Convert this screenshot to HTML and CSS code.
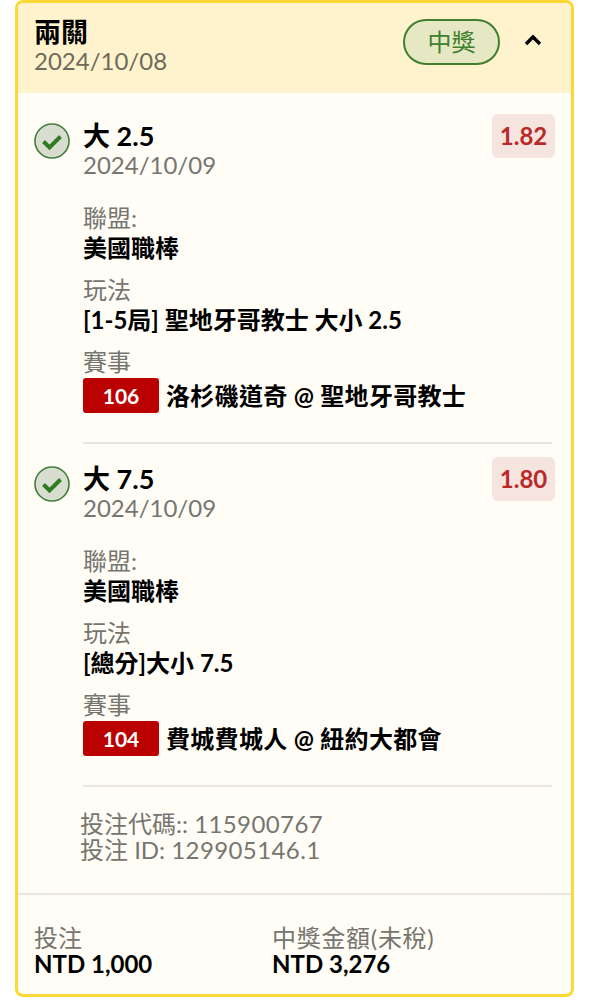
FILE: index.html
```html
<!DOCTYPE html>
<html lang="zh-Hant">
<head>
    <meta charset="UTF-8">
    <title>兩關</title>
    <link rel="stylesheet" href="styles.css">
</head>
<body>
    <div class="card">
        <header class="card-head">
            <div>
                <div class="card-title">兩關</div>
                <div class="card-date">2024/10/08</div>
            </div>
            <div class="head-right">
                <span class="status">中獎</span>
                <svg class="chevron" width="18" height="12" viewBox="0 0 18 12"><path d="M2 10l7-7 7 7" fill="none" stroke="#000" stroke-width="3.4"/></svg>
            </div>
        </header>

        <section class="leg">
            <svg class="check" width="36" height="36" viewBox="0 0 36 36"><circle cx="18" cy="18" r="17" fill="#d9ddcf" stroke="#3f7f3a" stroke-width="1.6"/><path d="M9.5 18.5l6 6 11-11" fill="none" stroke="#2e7d24" stroke-width="4"/></svg>
            <div class="leg-body">
                <div class="leg-top">
                    <div>
                        <div class="pick">大 2.5</div>
                        <div class="muted">2024/10/09</div>
                    </div>
                    <span class="odds">1.82</span>
                </div>
                <div class="info">
                    <div class="muted">聯盟:</div>
                    <div class="strong">美國職棒</div>
                </div>
                <div class="info">
                    <div class="muted">玩法</div>
                    <div class="strong">[1-5局] 聖地牙哥教士 大小 2.5</div>
                </div>
                <div class="info">
                    <div class="muted">賽事</div>
                    <div class="match"><span class="game-no">106</span><span class="strong">洛杉磯道奇 @ 聖地牙哥教士</span></div>
                </div>
            </div>
        </section>

        <section class="leg">
            <svg class="check" width="36" height="36" viewBox="0 0 36 36"><circle cx="18" cy="18" r="17" fill="#d9ddcf" stroke="#3f7f3a" stroke-width="1.6"/><path d="M9.5 18.5l6 6 11-11" fill="none" stroke="#2e7d24" stroke-width="4"/></svg>
            <div class="leg-body">
                <div class="leg-top">
                    <div>
                        <div class="pick">大 7.5</div>
                        <div class="muted">2024/10/09</div>
                    </div>
                    <span class="odds">1.80</span>
                </div>
                <div class="info">
                    <div class="muted">聯盟:</div>
                    <div class="strong">美國職棒</div>
                </div>
                <div class="info">
                    <div class="muted">玩法</div>
                    <div class="strong">[總分]大小 7.5</div>
                </div>
                <div class="info">
                    <div class="muted">賽事</div>
                    <div class="match"><span class="game-no">104</span><span class="strong">費城費城人 @ 紐約大都會</span></div>
                </div>
            </div>
        </section>

        <div class="codes">
            <div>投注代碼:: <span class="code-no">115900767</span></div>
            <div>投注 ID: <span class="code-no">129905146.1</span></div>
        </div>

        <footer class="totals">
            <div class="total">
                <div class="muted">投注</div>
                <div class="strong">NTD 1,000</div>
            </div>
            <div class="total">
                <div class="muted wide">中獎金額(未稅)</div>
                <div class="strong">NTD 3,276</div>
            </div>
        </footer>
    </div>
</body>
</html>
```

FILE: styles.css
```css
body {
    margin: 0;
    background-color: #fff;
    font-family: Lato, "Noto Sans CJK TC", sans-serif;
    font-size: 24px;
    line-height: 26px;
    color: #000;
}
.card {
    box-sizing: border-box;
    width: 559px;
    height: 997px;
    margin-left: 15px;
    background-color: #fffdf6;
    border: 3px solid #fdd835;
    border-radius: 8px;
    overflow: hidden;
}
.card-head {
    display: flex;
    justify-content: space-between;
    align-items: flex-start;
    height: 90px;
    padding: 13px 29px 0 16px;
    box-sizing: border-box;
    background-color: #fef3cd;
}
.card-title {
    font-size: 27px;
    font-weight: bold;
    line-height: 32px;
}
.card-date {
    color: #6f6a5c;
}
.head-right {
    display: flex;
    align-items: center;
    gap: 24px;
    padding-top: 3px;
}
.status {
    box-sizing: border-box;
    width: 97px;
    height: 46px;
    line-height: 42px;
    text-align: center;
    color: #3f7f2e;
    background-color: #e6e7c3;
    border: 2px solid #3f7f2e;
    border-radius: 23px;
}
.chevron {
    margin-top: -5px;
}
.leg {
    display: flex;
    margin: 0 19px 0 16px;
}
.check {
    flex: none;
    margin-top: 30px;
    margin-right: 13px;
}
.leg + .leg .check {
    margin-top: 22px;
}
.leg-body {
    flex: 1;
    padding: 21px 0 29px;
    border-bottom: 2px solid #e8e6df;
}
.leg + .leg .leg-body {
    padding-top: 13px;
}
.leg-top {
    display: flex;
    justify-content: space-between;
    align-items: flex-start;
    margin-bottom: 25px;
}
.pick {
    font-size: 27px;
    font-weight: bold;
    line-height: 33px;
    margin-top: 5px;
}
.muted {
    color: #77756f;
}
.wide {
    letter-spacing: 0.7px;
}
.strong {
    font-weight: bold;
}
.odds {
    box-sizing: border-box;
    width: 63px;
    height: 44px;
    margin-right: -3px;
    line-height: 44px;
    text-align: center;
    font-weight: bold;
    color: #b92a2a;
    background-color: #f6e4de;
    border-radius: 6px;
}
.info {
    margin-bottom: 13px;
}
.info .muted {
    line-height: 30px;
}
.info .strong {
    line-height: 29px;
}
.info:last-child {
    margin-bottom: 0;
}
.match {
    display: flex;
    align-items: center;
    gap: 7px;
    margin-top: 1px;
}
.match .strong {
    letter-spacing: 0.3px;
}
.game-no {
    width: 76px;
    height: 35px;
    line-height: 35px;
    text-align: center;
    color: #fff;
    font-size: 21px;
    font-weight: bold;
    background-color: #bb0000;
    border-radius: 3px;
}
.codes {
    padding: 24px 0 30px 62px;
    color: #77756f;
    border-bottom: 2px solid #e8e6df;
}
.code-no {
    letter-spacing: 0.4px;
}
.totals {
    display: flex;
    padding: 30px 16px 0;
}
.total {
    width: 238px;
}
```
